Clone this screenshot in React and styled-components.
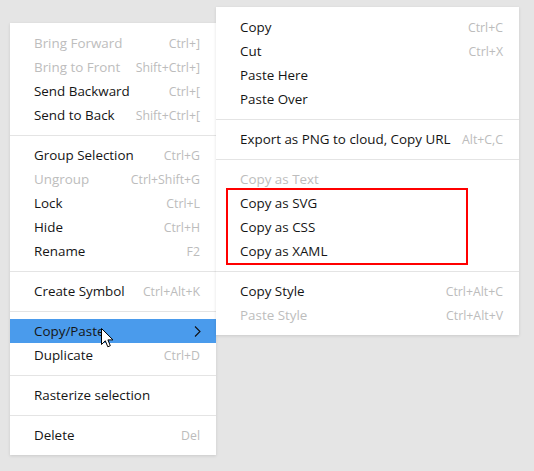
import styled, { createGlobalStyle } from 'styled-components'

const mainItems = [
	{ label: 'Bring Forward', shortcut: 'Ctrl+]', disabled: true },
	{ label: 'Bring to Front', shortcut: 'Shift+Ctrl+]', disabled: true },
	{ label: 'Send Backward', shortcut: 'Ctrl+[' },
	{ label: 'Send to Back', shortcut: 'Shift+Ctrl+[' },
	'sep',
	{ label: 'Group Selection', shortcut: 'Ctrl+G' },
	{ label: 'Ungroup', shortcut: 'Ctrl+Shift+G', disabled: true },
	{ label: 'Lock', shortcut: 'Ctrl+L' },
	{ label: 'Hide', shortcut: 'Ctrl+H' },
	{ label: 'Rename', shortcut: 'F2' },
	'sep',
	{ label: 'Create Symbol', shortcut: 'Ctrl+Alt+K' },
	'sep',
	{ label: 'Copy/Paste', submenu: true, active: true },
	{ label: 'Duplicate', shortcut: 'Ctrl+D' },
	'sep',
	{ label: 'Rasterize selection' },
	'sep',
	{ label: 'Delete', shortcut: 'Del' }
]

const subItems = [
	{ label: 'Copy', shortcut: 'Ctrl+C' },
	{ label: 'Cut', shortcut: 'Ctrl+X' },
	{ label: 'Paste Here' },
	{ label: 'Paste Over' },
	'sep',
	{ label: 'Export as PNG to cloud, Copy URL', shortcut: 'Alt+C,C' },
	'sep',
	{ label: 'Copy as Text', disabled: true },
	{
		group: [
			{ label: 'Copy as SVG' },
			{ label: 'Copy as CSS' },
			{ label: 'Copy as XAML' }
		]
	},
	'sep',
	{ label: 'Copy Style', shortcut: 'Ctrl+Alt+C' },
	{ label: 'Paste Style', shortcut: 'Ctrl+Alt+V', disabled: true }
]

const Chevron = () => (
	<svg width="7" height="11" viewBox="0 0 7 11">
		<path d="M1 0.5 L6 5.5 L1 10.5" fill="none" stroke="#111" strokeWidth="1.1" />
	</svg>
)

const Cursor = () => (
	<svg width="13" height="20" viewBox="0 0 13 20">
		<path
			d="M0.5 0.5 L0.5 16.5 L4.3 12.8 L6.8 18.8 L9.3 17.7 L6.9 11.9 L12 11.9 Z"
			fill="#fff"
			stroke="#000"
			strokeWidth="1"
			strokeLinejoin="miter"
		/>
	</svg>
)

const renderItem = (item, i) => {
	if (item === 'sep') return <Separator key={i} />
	if (item.group) {
		return <Highlight key={i}>{item.group.map(renderItem)}</Highlight>
	}
	return (
		<Item key={i} active={item.active} disabled={item.disabled}>
			<Label>{item.label}</Label>
			{item.shortcut && <Shortcut>{item.shortcut}</Shortcut>}
			{item.submenu && <Chevron />}
			{item.active && (
				<Pointer>
					<Cursor />
				</Pointer>
			)}
		</Item>
	)
}

const App = () => {
	return (
		<>
			<GlobalStyle />
			<Stage>
				<Menu>{mainItems.map(renderItem)}</Menu>
				<SubMenu>{subItems.map(renderItem)}</SubMenu>
			</Stage>
		</>
	)
}

export default App

const GlobalStyle = createGlobalStyle`
	html, body {
		margin: 0;
		padding: 0;
		background: #e5e5e5;
	}
	body {
		font-family: 'Open Sans', 'Noto Sans', sans-serif;
		width: 534px;
		height: 471px;
		overflow: hidden;
	}
`

const Stage = styled.div`
	display: flex;
	align-items: flex-start;
	padding-left: 10px;
`

const Menu = styled.div`
	width: 206px;
	margin-top: 23px;
	padding: 8px 0;
	background: #fff;
	box-shadow: 0 1px 3px rgba(0, 0, 0, 0.12);
`

const SubMenu = styled(Menu)`
	width: 303px;
	margin-top: 7px;
	position: relative;
	z-index: 1;
`

const Item = styled.div`
	position: relative;
	display: flex;
	align-items: center;
	justify-content: space-between;
	height: 24px;
	padding: 0 16px 0 24px;
	font-size: 13.4px;
	color: ${(p) => (p.disabled ? '#bdbdbd' : '#151515')};
	background: ${(p) => (p.active ? '#4a9bec' : 'transparent')};
	svg {
		margin-right: -1px;
	}
`

const Label = styled.span`
	white-space: nowrap;
`

const Shortcut = styled.span`
	font-size: 12.3px;
	color: #bcbcbc;
	white-space: nowrap;
`

const Separator = styled.div`
	height: 1px;
	margin: 8px 0 7px;
	background: #e4e4e4;
`

const Highlight = styled.div`
	position: relative;
	&::after {
		content: '';
		position: absolute;
		left: 10px;
		top: -3px;
		width: 242px;
		height: 77px;
		box-sizing: border-box;
		border: 2px solid #ff0000;
		pointer-events: none;
	}
`

const Pointer = styled.span`
	position: absolute;
	left: 91px;
	top: 9px;
	line-height: 0;
`
